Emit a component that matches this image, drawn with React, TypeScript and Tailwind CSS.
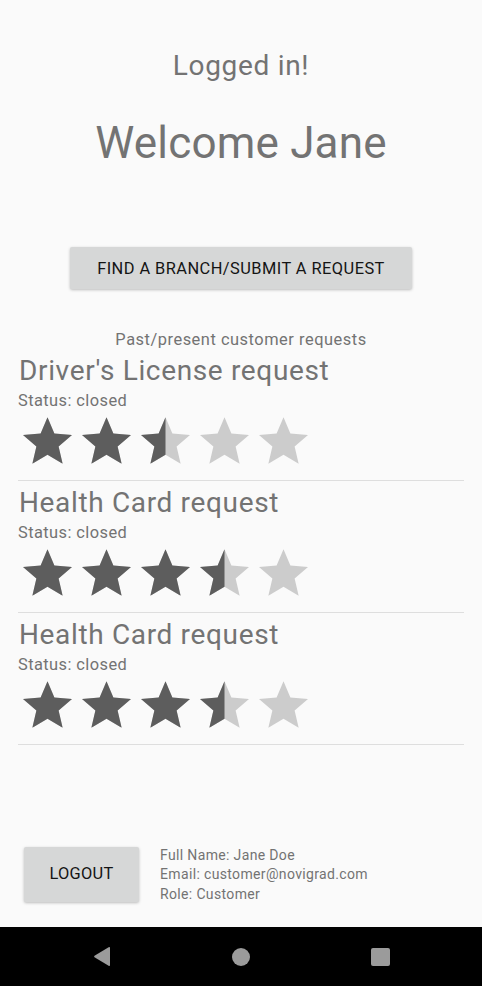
import React, { useId } from "react";

const STAR = "M12 17.27L18.18 21l-1.64-7.03L22 9.24l-7.19-.61L12 2 9.19 8.63 2 9.24l5.46 4.73L5.82 21z";

function Star({ fill }: { fill: number }) {
  const id = useId().replace(/:/g, "");
  return (
    <svg width="49" height="47" viewBox="2 2 20 19" className="block shrink-0">
      <defs>
        <clipPath id={`c${id}`}>
          <rect x="2" y="2" width={20 * fill} height="19" />
        </clipPath>
      </defs>
      <path d={STAR} fill="#cccccc" />
      {fill > 0 && <path d={STAR} fill="#5d5d5d" clipPath={`url(#c${id})`} />}
    </svg>
  );
}

function Rating({ value }: { value: number }) {
  return (
    <div className="ml-[5px] flex h-[47px] gap-[10px]">
      {[0, 1, 2, 3, 4].map((i) => {
        const f = Math.max(0, Math.min(1, value - i));
        return <Star key={i} fill={f} />;
      })}
    </div>
  );
}

function RequestItem({ title, rating }: { title: string; rating: number }) {
  return (
    <div className="flex flex-col pb-[5px]">
      <p className="pl-[1px] text-[28px] leading-[33px] tracking-[0.65px] text-[#737373]">{title}</p>
      <p className="mt-[4px] text-[16.4px] leading-[19px] tracking-[0.43px] text-[#737373]">Status: closed</p>
      <div className="mt-[7px]">
        <Rating value={rating} />
      </div>
      <div className="mt-[16px] h-px bg-[#dedede]" />
    </div>
  );
}

export default function App() {
  return (
    <div className="flex h-[986px] w-[482px] flex-col bg-[#fafafa] font-['Roboto',sans-serif]">
      <main className="flex flex-1 flex-col">
        <p className="pt-[49px] text-center text-[28px] leading-[33px] tracking-[0.7px] text-[#737373]">Logged in!</p>
        <p className="mt-[35px] text-center text-[44px] leading-[52px] tracking-[0.2px] text-[#737373]">Welcome Jane</p>
        <div className="mt-[78px] flex justify-center">
          <button className="h-[42px] w-[342px] rounded-[2px] bg-[#d6d7d7] pt-[2px] text-[16.4px] font-normal tracking-[0.45px] text-[#141414] shadow-[0_1px_3px_rgba(0,0,0,0.25)]">
            FIND A BRANCH/SUBMIT A REQUEST
          </button>
        </div>
        <p className="mt-[41px] text-center text-[16.4px] leading-[19px] tracking-[0.53px] text-[#737373]">
          Past/present customer requests
        </p>
        <div className="mt-[5px] flex flex-col px-[18px]">
          <RequestItem title="Driver's License request" rating={2.5} />
          <RequestItem title="Health Card request" rating={3.5} />
          <RequestItem title="Health Card request" rating={3.5} />
        </div>
      </main>
      <footer className="flex h-[55px] items-center gap-[21px] pl-[24px] mb-[25px]">
        <button className="h-[55px] w-[115px] rounded-[2px] bg-[#d6d7d7] text-[16.4px] font-normal tracking-[0.3px] text-[#141414] shadow-[0_1px_3px_rgba(0,0,0,0.25)]">
          LOGOUT
        </button>
        <div className="mt-[1px] flex flex-col text-[14px] leading-[19.3px] tracking-[0.35px] text-[#737373]">
          <span>Full Name: Jane Doe</span>
          <span>Email: customer@novigrad.com</span>
          <span>Role: Customer</span>
        </div>
      </footer>
      <nav className="flex h-[59px] items-center justify-center gap-[121px] bg-black">
        <svg width="18" height="21" viewBox="0 0 18 21" className="block">
          <path d="M17 2 L17 19 Q17 20.5 15.6 19.7 L1.5 11.2 Q0.6 10.5 1.5 9.8 L15.6 1.3 Q17 0.5 17 2 Z" fill="#9b9b9b" />
        </svg>
        <div className="h-[18px] w-[18px] rounded-full bg-[#9b9b9b]" />
        <div className="h-[18px] w-[19px] rounded-[2px] bg-[#9b9b9b]" />
      </nav>
    </div>
  );
}
